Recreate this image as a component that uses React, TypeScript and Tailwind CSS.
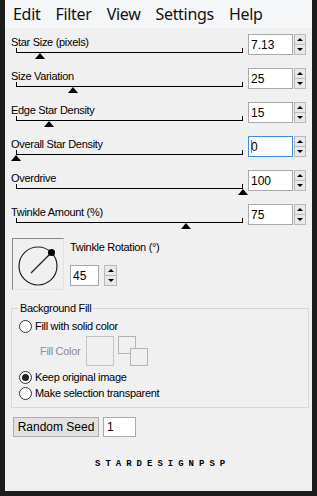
import React from 'react';

const sliders = [
  { label: 'Star Size (pixels)', value: '7.13', pos: 24 },
  { label: 'Size Variation', value: '25', pos: 57 },
  { label: 'Edge Star Density', value: '15', pos: 33 },
  { label: 'Overall Star Density', value: '0', pos: 0, focus: true },
  { label: 'Overdrive', value: '100', pos: 227 },
  { label: 'Twinkle Amount (%)', value: '75', pos: 170 },
];

const menu = ['Edit', 'Filter', 'View', 'Settings', 'Help'];

function Spinner({ className }: { className: string }) {
  return (
    <div className={`flex flex-col ${className}`}>
      <div className="flex-1 flex items-center justify-center border border-[#b9b9b9] bg-[#e9e9e9]">
        <div className="w-0 h-0 border-l-[3px] border-r-[3px] border-b-[3px] border-l-transparent border-r-transparent border-b-black" />
      </div>
      <div className="flex-1 flex items-center justify-center border border-t-0 border-[#b9b9b9] bg-[#e9e9e9]">
        <div className="w-0 h-0 border-l-[3px] border-r-[3px] border-t-[3px] border-l-transparent border-r-transparent border-t-black" />
      </div>
    </div>
  );
}

function Radio({ label, checked }: { label: string; checked?: boolean }) {
  return (
    <div className="flex items-center h-4 pl-[7px]">
      <div className="w-[13px] h-[13px] rounded-full border border-[#333] bg-white flex items-center justify-center">
        {checked && <div className="w-[7px] h-[7px] rounded-full bg-[#222]" />}
      </div>
      <span className="ml-[3px]">{label}</span>
    </div>
  );
}

export default function App() {
  return (
    <div className="w-[317px] h-[496px] bg-[#1c1c1c] pl-[5px] pr-[5px] pb-[5px] overflow-hidden">
      <div
        className="w-[307px] h-[491px] bg-[#f0f0f0] text-[11px] tracking-[-0.3px] text-black"
        style={{ fontFamily: '"Liberation Sans", Arial, sans-serif' }}
      >
        {/* menu bar */}
        <div
          className="h-[28px] bg-[#f5f6f7] flex items-center gap-[15px] pl-[8px] text-[16px] tracking-[-0.3px] text-[#111]"
          style={{ fontFamily: '"Noto Sans", "Open Sans", sans-serif' }}
        >
          {menu.map(m => (
            <span key={m}>{m}</span>
          ))}
        </div>

        {/* sliders */}
        <div className="pt-[6px]">
          {sliders.map(s => (
            <div key={s.label} className="flex h-[34px]">
              <div className="w-[243px]">
                <div className="pl-[6px] leading-4 h-4">{s.label}</div>
                <div className="relative ml-[11px] w-[227px] h-[3px] border-b border-black">
                  <div className="absolute left-0 bottom-0 w-px h-[4px] bg-black" />
                  <div className="absolute right-0 bottom-0 w-px h-[4px] bg-black" />
                  <div
                    className="absolute top-[3px] w-0 h-0 border-l-[5px] border-r-[5px] border-b-[6px] border-l-transparent border-r-transparent border-b-black"
                    style={{ left: s.pos - 5 }}
                  />
                </div>
              </div>
              <div
                className={`w-[45px] h-[21px] bg-white border flex items-center pl-[2px] text-[12px] tracking-normal ${
                  s.focus ? 'border-[#3c8ddb]' : 'border-[#a9a9a9]'
                }`}
              >
                {s.focus && <span className="w-px h-[13px] bg-[#c07030] mr-[-1px]" />}
                {s.value}
              </div>
              <Spinner className="ml-[1px] w-[12px] h-[21px]" />
            </div>
          ))}
        </div>

        {/* rotation */}
        <div className="flex pl-[7px]">
          <div className="w-[52px] h-[52px] border border-t-[#8a8a8a] border-l-[#8a8a8a] border-r-[#e3e3e3] border-b-[#e3e3e3] flex items-center justify-center">
            <svg width="44" height="44" viewBox="0 0 44 44">
              <circle cx="22" cy="24" r="19" fill="none" stroke="#222" strokeWidth="1.2" />
              <line x1="15" y1="31" x2="35" y2="11" stroke="#222" strokeWidth="1.2" />
              <circle cx="35.5" cy="10.5" r="3.5" fill="#000" />
            </svg>
          </div>
          <div className="ml-[6px]">
            <div className="leading-4 h-4 mt-[1px]">Twinkle Rotation (°)</div>
            <div className="flex mt-[10px]">
              <div className="w-[29px] h-[21px] bg-white border border-[#a9a9a9] flex items-center pl-[2px] text-[12px] tracking-normal">
                45
              </div>
              <Spinner className="ml-[5px] w-[13px] h-[21px]" />
            </div>
          </div>
        </div>

        {/* background fill group */}
        <fieldset className="ml-[6px] w-[298px] mt-[10px] border border-[#d8d8d8] pb-[6px]">
          <legend className="ml-[7px] px-[1px] leading-4">Background Fill</legend>
          <div className="pt-[2px]">
            <Radio label="Fill with solid color" />
            <div className="flex items-center mt-[2px] pl-[28px] h-[30px]">
              <span className="w-[46px] text-[#8d8d8d]">Fill Color</span>
              <div className="w-[28px] h-[30px] border border-[#c4c4c4]" />
              <svg width="31" height="30" viewBox="0 0 31 30" className="ml-[4px]">
                <rect x="0.5" y="0.5" width="17" height="17" fill="#f0f0f0" stroke="#b4b4b4" />
                <rect x="12.5" y="12.5" width="17" height="17" fill="#f0f0f0" stroke="#b4b4b4" />
              </svg>
            </div>
            <div className="mt-[3px]">
              <Radio label="Keep original image" checked />
              <Radio label="Make selection transparent" />
            </div>
          </div>
        </fieldset>

        {/* random seed */}
        <div className="flex pl-[8px] mt-[9px]">
          <div className="w-[86px] h-[20px] bg-[#e1e1e1] border border-[#adadad] flex items-center justify-center text-[12px] tracking-normal">
            Random Seed
          </div>
          <div className="ml-[4px] w-[33px] h-[20px] bg-white border border-[#a9a9a9] flex items-center pl-[3px] text-[12px] tracking-normal">
            1
          </div>
        </div>

        <div
          className="mt-[22px] pl-[90px] text-[9px] font-bold leading-[10px] tracking-[5px] text-black"
          style={{ fontFamily: '"Liberation Mono", monospace' }}
        >
          STARDESIGNPSP
        </div>
      </div>
    </div>
  );
}
